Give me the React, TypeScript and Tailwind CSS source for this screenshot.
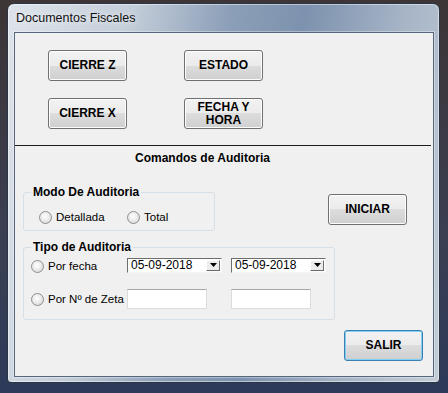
import type { ReactNode } from 'react';

function WinButton({ children, focused }: { children: ReactNode; focused?: boolean }) {
  return (
    <div
      className={
        focused
          ? 'flex h-[31px] w-[79px] shrink-0 items-center justify-center rounded-[3px] border border-[#3c7fb1] bg-[linear-gradient(#f2f2f2_0%,#ebebeb_50%,#dddddd_50%,#cfcfcf_100%)] text-center text-[12px] leading-[13px] font-bold text-black shadow-[inset_0_0_0_1px_#7fd0f4]'
          : 'flex h-[31px] w-[79px] shrink-0 items-center justify-center rounded-[3px] border border-[#707070] bg-[linear-gradient(#f2f2f2_0%,#ebebeb_50%,#dddddd_50%,#cfcfcf_100%)] text-center text-[12px] leading-[13px] font-bold text-black shadow-[inset_0_0_0_1px_#fcfcfc]'
      }
    >
      {children}
    </div>
  );
}

function Radio({ label }: { label: string }) {
  return (
    <div className="flex items-center gap-[4px]">
      <span className="h-[13px] w-[13px] shrink-0 rounded-full border border-[#8e8f8f] bg-[radial-gradient(circle_at_45%_40%,#ffffff_0%,#ececec_45%,#cdcdcd_100%)]" />
      <span className="text-[11.5px] leading-[13px] text-black">{label}</span>
    </div>
  );
}

function DatePicker() {
  return (
    <div className="flex h-[15px] w-[95px] items-center justify-between border border-t-[#6d6d6d] border-l-[#6d6d6d] border-r-[#f4f4f4] border-b-[#f4f4f4] bg-white pr-[1px] pl-[3px]">
      <span className="text-[12px] leading-[13px] text-black">05-09-2018</span>
      <span className="flex h-[11px] w-[14px] items-center justify-center border border-t-white border-l-white border-r-[#696969] border-b-[#696969] bg-[#ececec]">
        <svg width="7" height="4" viewBox="0 0 7 4">
          <path d="M0 0h7L3.5 4z" fill="#000" />
        </svg>
      </span>
    </div>
  );
}

function TextBox() {
  return <div className="h-[20px] w-[80px] border border-[#dcdcdc] border-t-[#a7a7a7] bg-white" />;
}

export default function App() {
  return (
    <div className="h-[393px] w-[448px] overflow-hidden bg-[linear-gradient(180deg,#3d3536_0%,#3b3f52_60%,#2d3a5a_100%)] pt-[3px] pl-[7px] font-['Liberation_Sans',Arial,sans-serif]">
      <div className="flex h-[380px] w-[433px] flex-col rounded-t-[7px] rounded-b-[4px] border border-[#2c3545] bg-[linear-gradient(100deg,#dde3ea_0%,#c4ced9_25%,#8c9fb8_45%,#7d92ae_60%,#a6b4c6_80%,#c3cdd8_100%)] shadow-[inset_0_0_0_1px_rgba(255,255,255,0.45)]">
        <div className="flex h-[28px] items-center pl-[8px]">
          <span className="text-[12.5px] text-[#111] [text-shadow:0_0_6px_#ffffff]">Documentos Fiscales</span>
        </div>
        <div className="ml-[6px] flex h-[345px] w-[420px] flex-col border border-[#56667c] bg-[#f0f0f0] shadow-[0_0_0_1px_rgba(255,255,255,0.35)]">
          <div className="mt-[17px] ml-[33px] flex gap-[57px]">
            <WinButton>CIERRE Z</WinButton>
            <WinButton>ESTADO</WinButton>
          </div>
          <div className="mt-[17px] ml-[33px] flex gap-[57px]">
            <WinButton>CIERRE X</WinButton>
            <WinButton>
              FECHA Y
              <br />
              HORA
            </WinButton>
          </div>
          <div className="mt-[16px] h-[1px] w-[416px] bg-[#1c1c1c]" />
          <div className="mt-[5px] pl-[120px] text-[12px] leading-[14px] font-bold text-black">Comandos de Auditoria</div>

          <div className="mt-[20px] ml-[8px] flex items-start">
            <fieldset className="w-[192px] rounded-[3px] border border-[#d5dfe5] pb-[6px]">
              <legend className="ml-[7px] px-[2px] text-[12px] leading-[14px] font-bold text-black">Modo De Auditoria</legend>
              <div className="mt-[12px] flex pl-[15px]">
                <div className="w-[88px]">
                  <Radio label="Detallada" />
                </div>
                <Radio label="Total" />
              </div>
            </fieldset>
            <div className="mt-[9px] ml-[113px]">
              <WinButton>INICIAR</WinButton>
            </div>
          </div>

          <fieldset className="mt-[9px] ml-[8px] w-[312px] rounded-[3px] border border-[#d5dfe5] pb-[10px]">
            <legend className="ml-[7px] px-[2px] text-[12px] leading-[14px] font-bold text-black">Tipo de Auditoria</legend>
            <div className="mt-[3px] flex items-center pl-[7px]">
              <div className="w-[96px] pt-[3px]">
                <Radio label="Por fecha" />
              </div>
              <DatePicker />
              <div className="ml-[9px]">
                <DatePicker />
              </div>
            </div>
            <div className="mt-[16px] flex items-center pl-[7px]">
              <div className="w-[96px]">
                <Radio label="Por Nº de Zeta" />
              </div>
              <TextBox />
              <div className="ml-[24px]">
                <TextBox />
              </div>
            </div>
          </fieldset>

          <div className="mt-[10px] ml-[329px]">
            <WinButton focused>SALIR</WinButton>
          </div>
        </div>
      </div>
    </div>
  );
}
